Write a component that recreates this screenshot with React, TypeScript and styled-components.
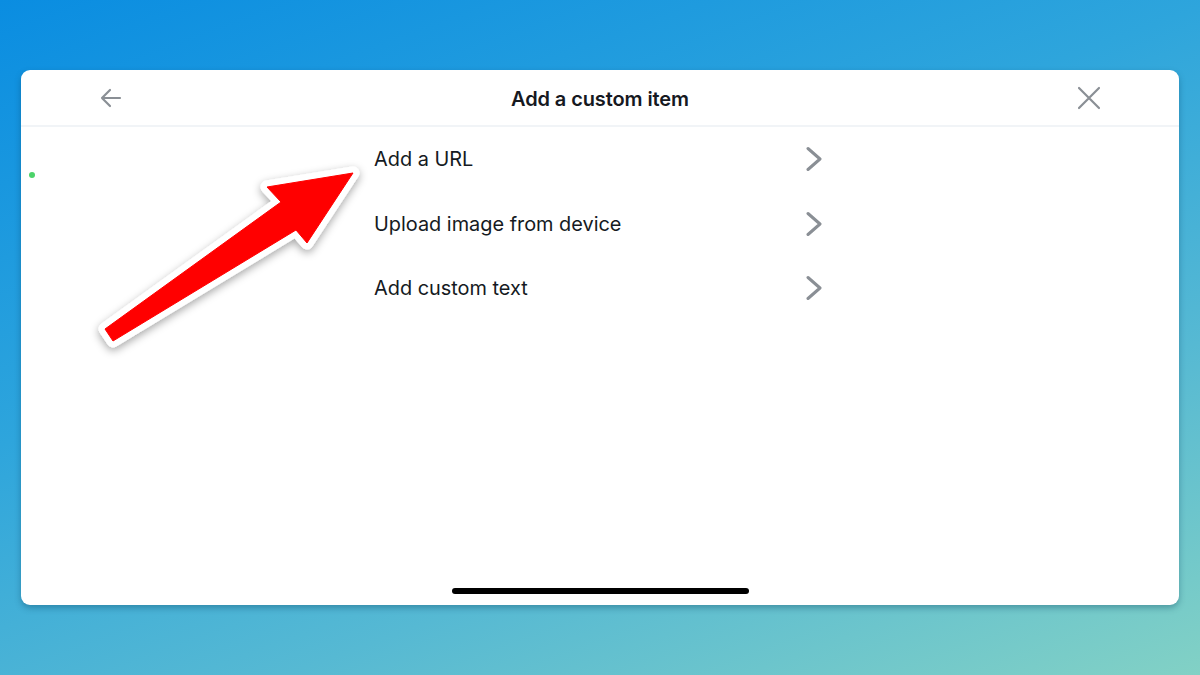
import React from "react";
import styled, { createGlobalStyle } from "styled-components";

const Global = createGlobalStyle`
  html, body, #root { margin: 0; padding: 0; height: 100%; }
  body {
    font-family: Inter, "Noto Sans", "Liberation Sans", sans-serif;
    background: linear-gradient(160deg, #0a8de1 0%, #2ea5dc 40%, #56b9d3 70%, #82d1c5 100%);
    overflow: hidden;
  }
`;

const Page = styled.div`
  position: relative;
  height: 100%;
  box-sizing: border-box;
  padding: 70px 21px 70px 21px;
  display: flex;
`;

const Card = styled.div`
  flex: 1;
  background: #fff;
  border-radius: 9px;
  box-shadow: 0 3px 6px rgba(0, 60, 90, 0.35);
  display: flex;
  flex-direction: column;
  position: relative;
  overflow: hidden;
`;

const Header = styled.div`
  height: 55px;
  border-bottom: 2px solid #f1f4f7;
  display: grid;
  grid-template-columns: 1fr auto 1fr;
  align-items: center;
  padding: 0 78px;
`;

const Title = styled.div`
  font-size: 20px;
  font-weight: 600;
  color: #16191f;
  letter-spacing: -0.1px;
  padding-top: 2px;
`;

const IconButton = styled.div<{ $align: "start" | "end" }>`
  display: flex;
  justify-content: ${(p) => (p.$align === "start" ? "flex-start" : "flex-end")};
  align-items: center;
  color: #8a8f95;
`;

const List = styled.div`
  width: 452px;
  margin: 0 auto;
  display: flex;
  flex-direction: column;
`;

const Row = styled.div`
  height: 64.5px;
  display: flex;
  align-items: center;
  justify-content: space-between;
  font-size: 19.9px;
  color: #151a22;
  padding-right: 4px;
`;

const HomeBar = styled.div`
  margin: auto auto 11px;
  width: 297px;
  height: 6px;
  border-radius: 3px;
  background: #000;
`;

const Dot = styled.div`
  position: absolute;
  left: 8px;
  top: 102px;
  width: 6px;
  height: 6px;
  border-radius: 50%;
  background: #4cd36a;
`;

const ArrowOverlay = styled.svg`
  position: absolute;
  left: 0;
  top: 0;
  pointer-events: none;
`;

const Back = () => (
  <svg width="24" height="24" viewBox="0 0 24 24" fill="none" stroke="currentColor" strokeWidth="2.2" strokeLinecap="round" strokeLinejoin="round">
    <path d="M21 12H3M11 4l-8 8 8 8" />
  </svg>
);

const Close = () => (
  <svg width="24" height="24" viewBox="0 0 24 24" fill="none" stroke="currentColor" strokeWidth="2.2" strokeLinecap="round">
    <path d="M2 2l20 20M22 2L2 22" />
  </svg>
);

const Chevron = () => (
  <svg width="16" height="26" viewBox="0 0 16 26" fill="none" stroke="#8a8f95" strokeWidth="3" strokeLinecap="round" strokeLinejoin="round">
    <path d="M2 2.5l12 10.5-12 10.5" />
  </svg>
);

const items = ["Add a URL", "Upload image from device", "Add custom text"];

export default function App() {
  const arrow = "M353,173 L267,187 L281,202 L105,329 L113,341 L296,230 L307,243 Z";
  return (
    <>
      <Global />
      <Page>
        <Card>
          <Header>
            <IconButton $align="start"><Back /></IconButton>
            <Title>Add a custom item</Title>
            <IconButton $align="end"><Close /></IconButton>
          </Header>
          <List>
            {items.map((t) => (
              <Row key={t}>
                <span>{t}</span>
                <Chevron />
              </Row>
            ))}
          </List>
          <HomeBar />
          <Dot />
        </Card>
        <ArrowOverlay width="1200" height="675" viewBox="0 0 1200 675">
          <defs>
            <filter id="sh" x="-20%" y="-20%" width="140%" height="140%">
              <feDropShadow dx="0" dy="3" stdDeviation="4" floodColor="#000" floodOpacity="0.35" />
            </filter>
          </defs>
          <path d={arrow} fill="#fff" stroke="#fff" strokeWidth="13" strokeLinejoin="round" filter="url(#sh)" />
          <path d={arrow} fill="#ff0000" stroke="#ff0000" strokeWidth="1" strokeLinejoin="round" />
        </ArrowOverlay>
      </Page>
    </>
  );
}
